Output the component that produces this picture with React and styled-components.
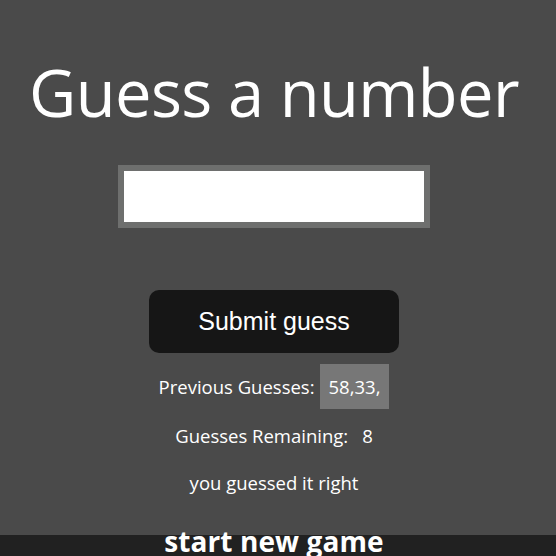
import React from "react";
import styled, { createGlobalStyle } from "styled-components";

const Global = createGlobalStyle`
  html, body { margin: 0; padding: 0; background: #4a4a4a; }
  body { font-family: "Open Sans", "Noto Sans", sans-serif; color: #fff; }
`;

const Page = styled.div`
  height: 556px;
  overflow: hidden;
  display: flex;
  flex-direction: column;
  background: #4a4a4a;
`;

const Main = styled.main`
  flex: 1;
  display: flex;
  flex-direction: column;
  align-items: center;
  padding-right: 8px;
`;

const Title = styled.h1`
  margin: 52px 0 0;
  font-size: 65px;
  font-weight: 400;
  line-height: 80px;
  letter-spacing: -0.6px;
  color: #fff;
`;

const GuessInput = styled.input`
  box-sizing: border-box;
  margin-top: 33px;
  width: 312px;
  height: 63px;
  border: 6px solid #6e6f6e;
  background: #fff;
  outline: none;
  padding: 0 8px;
  font-size: 24px;
`;

const SubmitButton = styled.button`
  margin-top: 62px;
  width: 250px;
  height: 63px;
  border: none;
  border-radius: 10px;
  background: #161616;
  color: #fff;
  font-family: "Liberation Sans", Arial, sans-serif;
  font-size: 25px;
`;

const InfoRow = styled.div`
  display: flex;
  align-items: center;
  justify-content: center;
  height: ${(p) => p.$h}px;
  margin-top: ${(p) => p.$mt}px;
  font-size: 18.5px;
  color: #fff;
`;

const Label = styled.span`
  margin-right: ${(p) => p.$gap}px;
`;

const GuessBox = styled.span`
  display: flex;
  align-items: center;
  height: 45px;
  padding: 0 9px;
  background: #777777;
`;

const Footer = styled.footer`
  width: 100%;
  height: 21px;
  background: #212121;
  display: flex;
  justify-content: center;
  padding-right: 8px;
  box-sizing: border-box;
`;

const NewGame = styled.button`
  border: none;
  background: none;
  color: #fff;
  font-family: "Open Sans", sans-serif;
  font-weight: 700;
  font-size: 28px;
  line-height: 1;
  margin-top: -9px;
  padding: 0;
  height: 30px;
  letter-spacing: 0.1px;
`;

export default function App() {
  return (
    <Page>
      <Global />
      <Main>
        <Title>Guess a number</Title>
        <GuessInput type="text" />
        <SubmitButton>Submit guess</SubmitButton>
        <InfoRow $h={45} $mt={11}>
          <Label $gap={5}>Previous Guesses:</Label>
          <GuessBox>58,33,</GuessBox>
        </InfoRow>
        <InfoRow $h={30} $mt={11}>
          <Label $gap={14}>Guesses Remaining:</Label>
          <span>8</span>
        </InfoRow>
        <InfoRow $h={30} $mt={17}>you guessed it right</InfoRow>
      </Main>
      <Footer>
        <NewGame>start new game</NewGame>
      </Footer>
    </Page>
  );
}
